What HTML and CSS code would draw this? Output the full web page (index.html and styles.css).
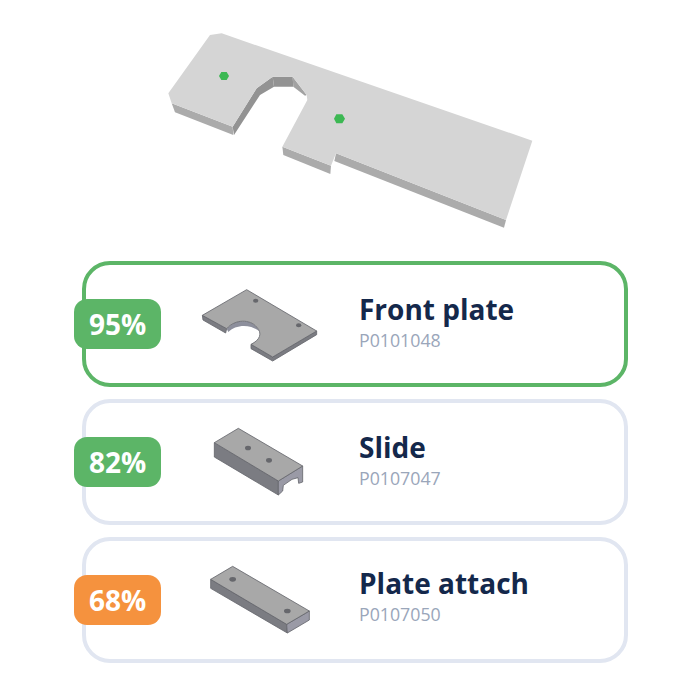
FILE: index.html
```html
<!DOCTYPE html>
<html lang="en">
<head>
    <meta charset="UTF-8">
    <title>Part matches</title>
    <link rel="stylesheet" href="styles.css">
</head>
<body>
    <!-- Scanned part -->
    <header class="hero">
        <svg class="hero-model" viewBox="0 0 1200 660" width="400" height="220">
            <polygon class="hero-side" points="65,250 75,277 250,345 248,320"/>
            <polygon class="hero-wall" points="248,320 252,345 330,225 372,200 368,170 320,205"/>
            <polygon class="hero-wall" points="368,170 372,200 430,200 428,170"/>
            <polygon class="hero-wall-light" points="428,170 430,200 465,227 470,225"/>
            <polygon class="hero-side" points="397,380 400,405 541,462 543,437"/>
            <polygon class="hero-side" points="558,400 553,423 1062,623 1068,600"/>
            <polygon class="hero-top" points="55,220 180,45 215,40 1147,362 1068,600 558,400 543,437 397,380 472,240 470,225 428,170 368,170 320,205 248,320 65,250"/>
            <polygon class="hero-pin" points="207,168 214,156 230,156 237,168 230,180 214,180"/>
            <polygon class="hero-pin" points="552,296 559,283 577,283 585,296 577,310 559,310"/>
        </svg>
    </header>

    <!-- Matches -->
    <main class="matches">
        <section class="card card-best">
            <span class="score score-green">95%</span>
            <svg class="thumb" viewBox="402 70 390 300" width="130" height="100">
                <polygon class="part-side" points="427,194 429,208 497,247 500,234"/>
                <polygon class="part-side" points="573,281 573,294 638,331 770,252 770,241 638,319"/>
                <path class="part-wall" d="M500,234 C525,205 570,205 590,229 L598,242 C570,218 525,222 505,244 Z"/>
                <path class="part-top" d="M427,194 L560,117 L770,241 L638,319 L573,281 C600,268 608,248 590,229 C570,205 525,205 500,234 Z"/>
                <ellipse class="part-hole" cx="587" cy="150" rx="8" ry="6"/>
                <ellipse class="part-hole" cx="716" cy="224" rx="8" ry="6"/>
            </svg>
            <div class="info">
                <h2 class="name">Front plate</h2>
                <p class="ref">P0101048</p>
            </div>
        </section>

        <section class="card">
            <span class="score score-green">82%</span>
            <svg class="thumb" viewBox="402 48 390 300" width="130" height="100">
                <polygon class="part-side" points="463,140 463,183 655,297 655,255"/>
                <polygon class="part-end" points="655,255 728,210 728,258 716,262 714,245 696,250 670,268 668,285 655,297"/>
                <polygon class="part-top" points="463,140 535,97 728,210 655,255"/>
                <ellipse class="part-hole" cx="564" cy="156" rx="9" ry="7"/>
                <ellipse class="part-hole" cx="627" cy="193" rx="9" ry="7"/>
            </svg>
            <div class="info">
                <h2 class="name">Slide</h2>
                <p class="ref">P0107047</p>
            </div>
        </section>

        <section class="card">
            <span class="score score-orange">68%</span>
            <svg class="thumb" viewBox="402 55 390 300" width="130" height="100">
                <polygon class="part-side" points="452,143 452,170 682,304 680,278"/>
                <polygon class="part-end" points="680,278 748,238 748,265 682,304"/>
                <polygon class="part-top" points="452,143 518,104 748,238 680,278"/>
                <ellipse class="part-hole" cx="518" cy="143" rx="10" ry="7"/>
                <ellipse class="part-hole" cx="682" cy="238" rx="10" ry="7"/>
            </svg>
            <div class="info info-raised">
                <h2 class="name">Plate attach</h2>
                <p class="ref">P0107050</p>
            </div>
        </section>
    </main>
</body>
</html>
```

FILE: styles.css
```css
body {
    font-family: "Open Sans", sans-serif;
    background-color: #fff;
    margin: 0;
    padding: 0;
}

.hero {
    padding: 20px 0 21px 150px;
}
.hero-model {
    display: block;
    filter: blur(0.6px);
}
.hero-top {
    fill: #d5d5d5;
}
.hero-side {
    fill: #ababab;
}
.hero-wall {
    fill: #939393;
}
.hero-wall-light {
    fill: #a2a2a2;
}
.hero-pin {
    fill: #3cb853;
}

.matches {
    display: flex;
    flex-direction: column;
    gap: 12.5px;
    width: 546px;
    margin-left: 82px;
}
.card {
    position: relative;
    display: flex;
    align-items: center;
    gap: 35px;
    box-sizing: border-box;
    height: 125.5px;
    padding-left: 108px;
    border: 4px solid #e1e6f1;
    border-radius: 28px;
}
.card-best {
    border-color: #5cb567;
}

.score {
    position: absolute;
    left: -12px;
    top: 50%;
    width: 87px;
    height: 50px;
    margin-top: -25px;
    border-radius: 13px;
    color: #fff;
    font-size: 28px;
    font-weight: 700;
    line-height: 50px;
    text-align: center;
}
.score-green {
    background-color: #5cb567;
}
.score-orange {
    background-color: #f5923e;
}

.thumb {
    display: block;
    flex-shrink: 0;
    filter: blur(0.5px);
}
.part-top {
    fill: #a8a8a8;
    stroke: #66676e;
    stroke-width: 2.5;
    stroke-linejoin: round;
}
.part-side {
    fill: #7b7c82;
    stroke: #66676e;
    stroke-width: 2.5;
    stroke-linejoin: round;
}
.part-end {
    fill: #9a9aa6;
    stroke: #66676e;
    stroke-width: 2.5;
    stroke-linejoin: round;
}
.part-wall {
    fill: #8d8f9c;
}
.part-hole {
    fill: #66676c;
}

.info {
    padding-bottom: 4px;
}
.info-raised {
    padding-bottom: 9px;
}
.name {
    margin: 0;
    color: #14284b;
    font-size: 28px;
    font-weight: 700;
    line-height: 34px;
}
.ref {
    margin: 3px 0 0;
    color: #9aa6ba;
    font-size: 17.75px;
    line-height: 22px;
}
```
